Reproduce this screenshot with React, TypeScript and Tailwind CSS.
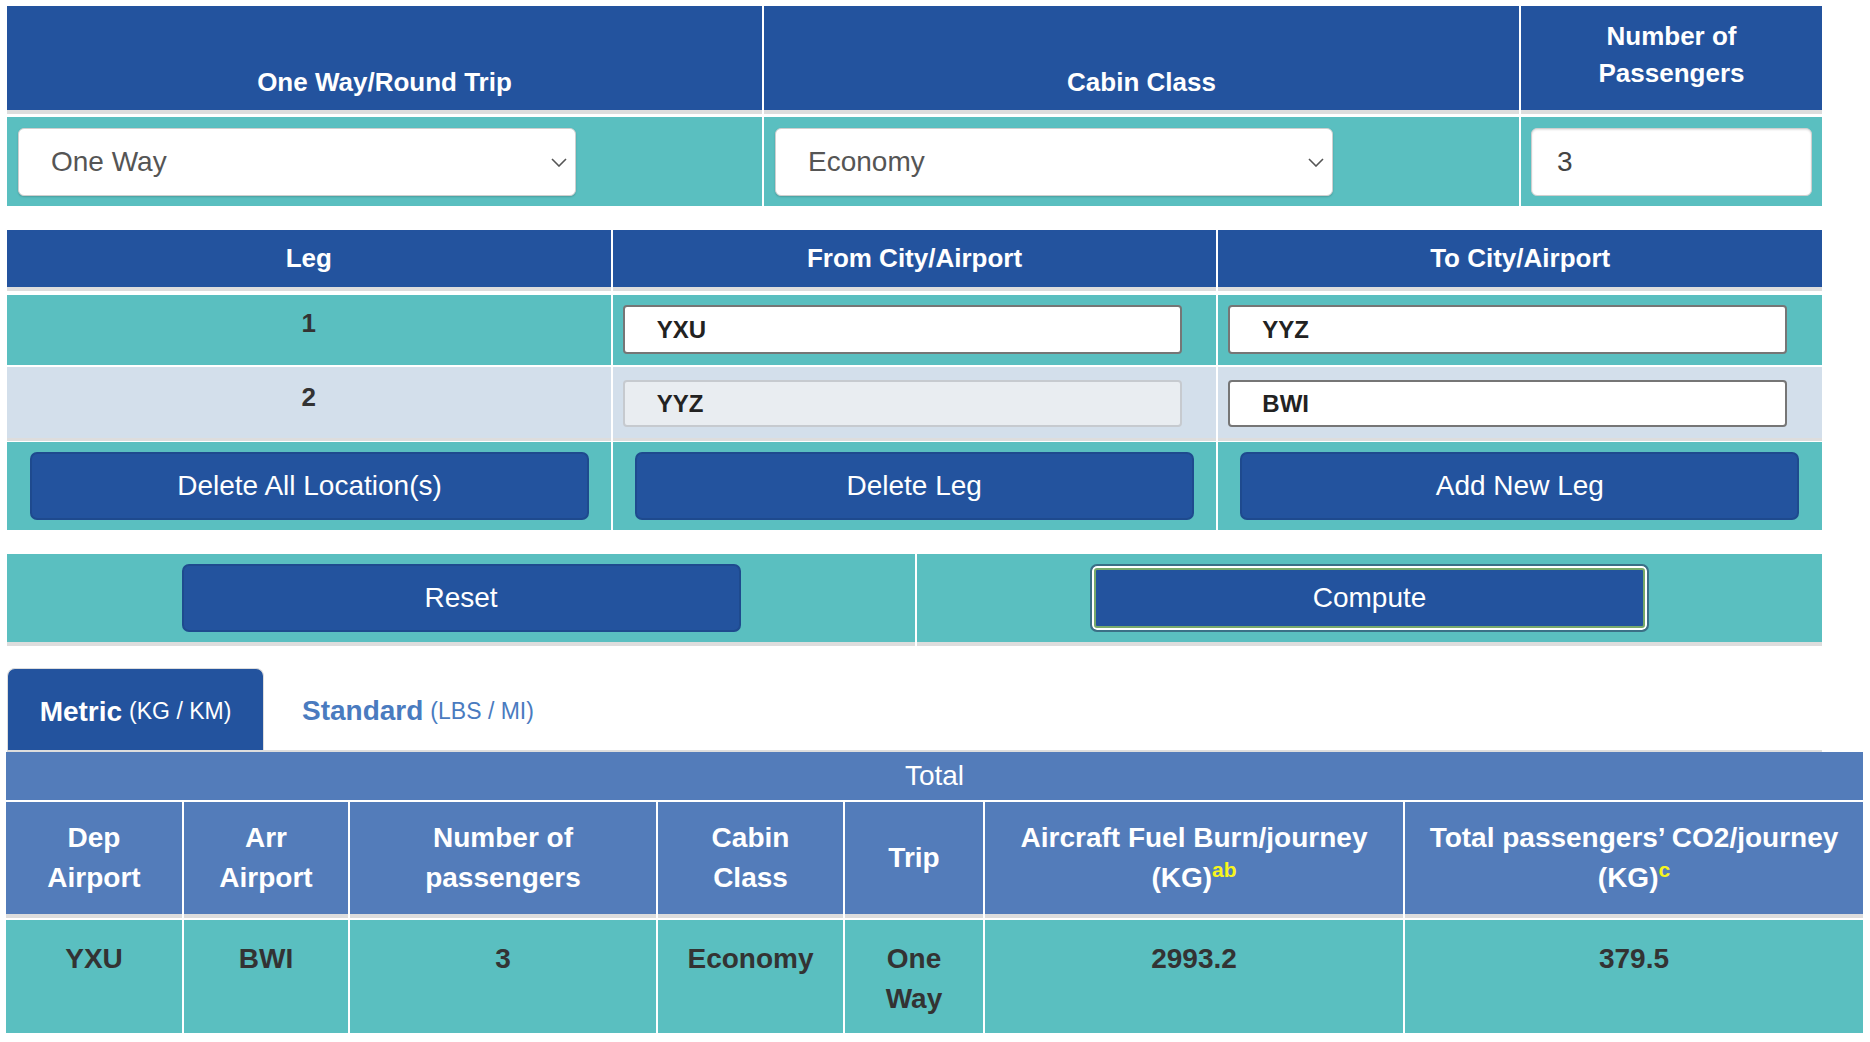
import { useState } from 'react';

const BLUE = 'bg-[#23539e]';

// Small chevron used by the native-looking selects
function SelectChevron() {
  return (
    <svg width="16" height="9" viewBox="0 0 16 9" className="flex-shrink-0">
      <polyline points="1,1 8,8 15,1" fill="none" stroke="#555" strokeWidth="1.6" />
    </svg>
  );
}

function FakeSelect({ value }: { value: string }) {
  return (
    <div className="flex h-[68px] w-[558px] items-center justify-between rounded-[6px] border border-[#cfcfcf] bg-white pl-[32px] pr-[8px] text-[28px] text-[#555] shadow-[0_1px_2px_rgba(0,0,0,0.18)]">
      <span>{value}</span>
      <SelectChevron />
    </div>
  );
}

function BlueButton({ label, focused = false }: { label: string; focused?: boolean }) {
  return (
    <button
      className={`flex h-[68px] w-[559px] items-center justify-center rounded-[7px] ${BLUE} text-[28px] text-white ${
        focused
          ? 'border-2 border-[#3b6f86] shadow-[inset_0_0_0_2px_#ffffff,inset_0_0_0_4px_#78a96b]'
          : 'border-2 border-[#1e4a8e]'
      }`}
    >
      {label}
    </button>
  );
}

const resultCols = [
  { head: ['Dep', 'Airport'], value: ['YXU'] },
  { head: ['Arr', 'Airport'], value: ['BWI'] },
  { head: ['Number of', 'passengers'], value: ['3'] },
  { head: ['Cabin', 'Class'], value: ['Economy'] },
  { head: ['Trip'], value: ['One', 'Way'] },
  { head: ['Aircraft Fuel Burn/journey', '(KG)'], sup: 'ab', value: ['2993.2'] },
  { head: ['Total passengers\u2019 CO2/journey', '(KG)'], sup: 'c', value: ['379.5'] },
];

export default function App() {
  const [tab, setTab] = useState<'metric' | 'standard'>('metric');

  return (
    <div className="min-h-screen bg-white pl-[7px] pt-[6px] font-['Liberation_Sans',Arial,sans-serif]">
      {/* Trip options */}
      <div className="grid w-[1815px] grid-cols-[755px_755px_301px] gap-x-[2px] gap-y-[3px]">
        <div className={`flex h-[108px] items-end justify-center border-b-4 border-[#dddddd] ${BLUE} pb-[9px] text-[26px] font-bold leading-[37px] text-white`}>
          One Way/Round Trip
        </div>
        <div className={`flex h-[108px] items-end justify-center border-b-4 border-[#dddddd] ${BLUE} pb-[9px] text-[26px] font-bold leading-[37px] text-white`}>
          Cabin Class
        </div>
        <div className={`flex h-[108px] flex-col items-center justify-end border-b-4 border-[#dddddd] ${BLUE} pb-[18px] text-[26px] font-bold leading-[37px] text-white`}>
          <span>Number of</span>
          <span>Passengers</span>
        </div>
        <div className="h-[89px] bg-[#5abfc0] pl-[11px] pt-[11px]">
          <FakeSelect value="One Way" />
        </div>
        <div className="h-[89px] bg-[#5abfc0] pl-[11px] pt-[11px]">
          <FakeSelect value="Economy" />
        </div>
        <div className="h-[89px] bg-[#5abfc0] px-[10px] pt-[11px]">
          <div className="flex h-[68px] items-center rounded-[6px] border border-[#cfcfcf] bg-white pl-[25px] text-[28px] text-[#444] shadow-[inset_0_1px_2px_rgba(0,0,0,0.12)]">
            3
          </div>
        </div>
      </div>

      {/* Legs */}
      <div className="mt-[24px] w-[1815px]">
        <div className="grid grid-cols-3 gap-x-[2px]">
          {['Leg', 'From City/Airport', 'To City/Airport'].map((h) => (
            <div
              key={h}
              className={`flex h-[61px] items-center justify-center border-b-4 border-[#dddddd] ${BLUE} text-[26px] font-bold leading-[37px] text-white`}
            >
              {h}
            </div>
          ))}
        </div>
        <div className="mt-[4px] grid grid-cols-3 gap-x-[2px]">
          <div className="h-[70px] bg-[#5abfc0] pt-[10px] text-center text-[26px] font-bold leading-[37px] text-[#333]">1</div>
          <div className="h-[70px] bg-[#5abfc0] pl-[10px] pt-[10px]">
            <div className="flex h-[49px] w-[559px] items-center rounded-[4px] border-2 border-[#767676] bg-white pl-[32px] text-[24px] font-bold text-[#222]">
              YXU
            </div>
          </div>
          <div className="h-[70px] bg-[#5abfc0] pl-[10px] pt-[10px]">
            <div className="flex h-[49px] w-[559px] items-center rounded-[4px] border-2 border-[#767676] bg-white pl-[32px] text-[24px] font-bold text-[#222]">
              YYZ
            </div>
          </div>
        </div>
        <div className="mt-[2px] grid grid-cols-3 gap-x-[2px]">
          <div className="h-[74px] border-b-[3px] border-[#dddddd] bg-[#d3dfeb] pt-[12px] text-center text-[26px] font-bold leading-[37px] text-[#333]">
            2
          </div>
          <div className="h-[74px] border-b-[3px] border-[#dddddd] bg-[#d3dfeb] pl-[10px] pt-[13px]">
            <div className="flex h-[47px] w-[559px] items-center rounded-[4px] border-2 border-[#c6cacf] bg-[#e9edf1] pl-[32px] text-[24px] font-bold text-[#222]">
              YYZ
            </div>
          </div>
          <div className="h-[74px] border-b-[3px] border-[#dddddd] bg-[#d3dfeb] pl-[10px] pt-[13px]">
            <div className="flex h-[47px] w-[559px] items-center rounded-[4px] border-2 border-[#767676] bg-white pl-[32px] text-[24px] font-bold text-[#222]">
              BWI
            </div>
          </div>
        </div>
        <div className="mt-[1px] grid grid-cols-3 gap-x-[2px]">
          {['Delete All Location(s)', 'Delete Leg', 'Add New Leg'].map((b, i) => (
            <div key={b} className={`h-[88px] bg-[#5abfc0] pt-[10px] ${i === 0 ? 'pl-[23px]' : 'pl-[22px]'}`}>
              <BlueButton label={b} />
            </div>
          ))}
        </div>
      </div>

      {/* Reset / Compute */}
      <div className="mt-[24px] grid w-[1815px] grid-cols-[908px_905px] gap-x-[2px]">
        <div className="flex h-[92px] justify-center border-b-4 border-[#dddddd] bg-[#5abfc0] pt-[10px]">
          <BlueButton label="Reset" />
        </div>
        <div className="flex h-[92px] justify-center border-b-4 border-[#dddddd] bg-[#5abfc0] pt-[10px]">
          <BlueButton label="Compute" focused />
        </div>
      </div>

      {/* Unit tabs */}
      <div className="mt-[22px] flex h-[84px] w-[1815px] items-end border-b-2 border-[#dddddd]">
        <button
          onClick={() => setTab('metric')}
          className={`flex h-[82px] w-[257px] items-center justify-center rounded-t-[8px] border border-b-0 border-[#dddddd] pt-[4px] ${
            tab === 'metric' ? `${BLUE} text-white` : 'bg-white text-[#4a7bbf]'
          }`}
        >
          <span className="text-[28px] font-bold">Metric</span>
          <span className="ml-[7px] text-[23px]">(KG / KM)</span>
        </button>
        <button
          onClick={() => setTab('standard')}
          className={`ml-[4px] flex h-[82px] items-center rounded-t-[8px] px-[34px] pt-[4px] ${
            tab === 'standard' ? `${BLUE} text-white` : 'bg-white text-[#4a7bbf]'
          }`}
        >
          <span className="text-[28px] font-bold">Standard</span>
          <span className="ml-[7px] text-[23px]">(LBS / MI)</span>
        </button>
      </div>

      {/* Results */}
      <div className="-ml-[1px] w-[1857px]">
        <div className="flex h-[48px] items-center justify-center bg-[#537cba] text-[28px] text-white">Total</div>
        <div className="mt-[2px] grid grid-cols-[176px_164px_306px_185px_138px_418px_458px] gap-x-[2px]">
          {resultCols.map((c) => (
            <div
              key={c.head.join(' ')}
              className="flex h-[116px] flex-col items-center justify-center border-b-4 border-[#dddddd] bg-[#537cba] text-center text-[28px] font-bold leading-[40px] text-white"
            >
              {c.head.map((line, i) => (
                <span key={line}>
                  {line}
                  {c.sup && i === c.head.length - 1 && (
                    <sup className="text-[21px] text-[#f7f51c]">{c.sup}</sup>
                  )}
                </span>
              ))}
            </div>
          ))}
        </div>
        <div className="mt-[2px] grid grid-cols-[176px_164px_306px_185px_138px_418px_458px] gap-x-[2px]">
          {resultCols.map((c) => (
            <div
              key={c.head.join(' ')}
              className="flex h-[113px] flex-col items-center bg-[#5abfc0] pt-[19px] text-center text-[28px] font-bold leading-[40px] text-[#333]"
            >
              {c.value.map((v) => (
                <span key={v}>{v}</span>
              ))}
            </div>
          ))}
        </div>
      </div>
    </div>
  );
}
